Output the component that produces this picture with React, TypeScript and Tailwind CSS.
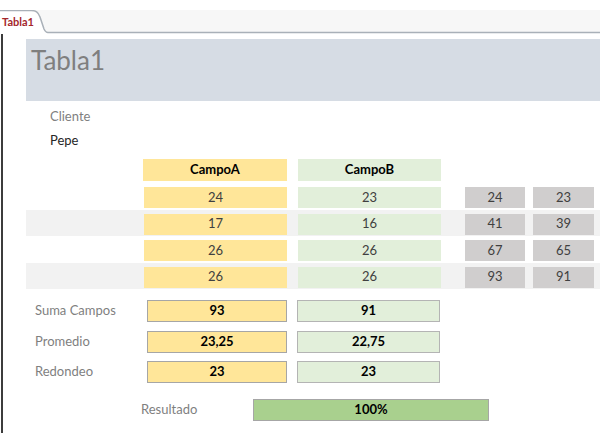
import React from "react";

const rows = [
  { a: "24", b: "23", sa: "24", sb: "23" },
  { a: "17", b: "16", sa: "41", sb: "39" },
  { a: "26", b: "26", sa: "67", sb: "65" },
  { a: "26", b: "26", sa: "93", sb: "91" },
];

const totals = [
  { label: "Suma Campos", a: "93", b: "91" },
  { label: "Promedio", a: "23,25", b: "22,75" },
  { label: "Redondeo", a: "23", b: "23" },
];

export default function App() {
  return (
    <div className="w-[600px] h-[433px] bg-white overflow-hidden font-['Lato',sans-serif] text-[13px]">
      {/* pestaña */}
      <div className="relative mt-[10px] h-[24px] bg-[#f7f7f7]">
        <svg className="absolute inset-0" width="600" height="24" viewBox="0 0 600 24">
          <path d="M0,24 L0,0.5 L31,0.5 C36,0.5 38,2 40,7 L44,19 C45.5,22.5 47,22.5 50,22.5 L600,22.5 L600,24 Z" fill="#ffffff" />
          <path d="M0,0.5 L31,0.5 C36,0.5 38,2 40,7 L44,19 C45.5,22.5 47,22.5 50,22.5 L600,22.5" fill="none" stroke="#a9b0b8" strokeWidth="1.5" />
        </svg>
        <span className="relative pl-[2px] leading-[24px] text-[11px] font-bold text-[#a4262c]">Tabla1</span>
      </div>

      {/* cuerpo */}
      <div className="ml-[1px] h-[399px] border-l-2 border-[#3c3c3c] pt-[5px]">
        <div className="ml-[23px] h-[62px] bg-[#d6dce4] pl-[5px] pt-[5px]">
          <h1 className="text-[26px] leading-[32px] text-[#7f7f7f]">Tabla1</h1>
        </div>

        <div className="mt-[3px] pl-[47px]">
          <div className="h-[24px] leading-[24px] text-[#7f7f7f]">Cliente</div>
          <div className="h-[24px] leading-[24px] text-[#262626]">Pepe</div>
        </div>

        {/* encabezado */}
        <div className="mt-[7px] flex pl-[140px]">
          <div className="w-[144px] h-[22px] bg-[#ffe699] flex items-center justify-center font-bold text-black">CampoA</div>
          <div className="ml-[11px] w-[143px] h-[22px] bg-[#e2efda] flex items-center justify-center font-bold text-black">CampoB</div>
        </div>

        {/* detalle */}
        <div className="mt-[2px]">
          {rows.map((r, i) => (
            <div
              key={i}
              className={`ml-[23px] h-[26.5px] flex items-end pb-[1.5px] pl-[118px] text-[#404040] ${i % 2 === 1 ? "bg-[#f2f2f2]" : "bg-white"}`}
            >
              <div className="w-[143px] h-[21px] bg-[#ffe699] flex items-center justify-center">{r.a}</div>
              <div className="ml-[11px] w-[143px] h-[21px] bg-[#e2efda] flex items-center justify-center">{r.b}</div>
              <div className="ml-[24px] w-[60px] h-[21px] bg-[#d0cece] flex items-center justify-center">{r.sa}</div>
              <div className="ml-[8px] w-[61px] h-[21px] bg-[#d0cece] flex items-center justify-center">{r.sb}</div>
            </div>
          ))}
        </div>

        {/* totales */}
        <div className="mt-[11px] flex flex-col gap-[8.5px] pl-[32px]">
          {totals.map((t) => (
            <div key={t.label} className="flex items-center h-[22px]">
              <div className="w-[112px] text-[#7f7f7f]">{t.label}</div>
              <div className="w-[140px] h-[22px] bg-[#ffe699] border border-[#a6a6a6] flex items-center justify-center font-bold text-black">{t.a}</div>
              <div className="ml-[10px] w-[143px] h-[22px] bg-[#e2efda] border border-[#b4b4b4] flex items-center justify-center font-bold text-black">{t.b}</div>
            </div>
          ))}
        </div>

        <div className="mt-[16px] flex items-center h-[22px] pl-[138px]">
          <div className="w-[112px] text-[#7f7f7f]">Resultado</div>
          <div className="w-[236px] h-[22px] bg-[#a9d08e] border border-[#a6a6a6] flex items-center justify-center font-bold text-black">100%</div>
        </div>
      </div>
    </div>
  );
}
